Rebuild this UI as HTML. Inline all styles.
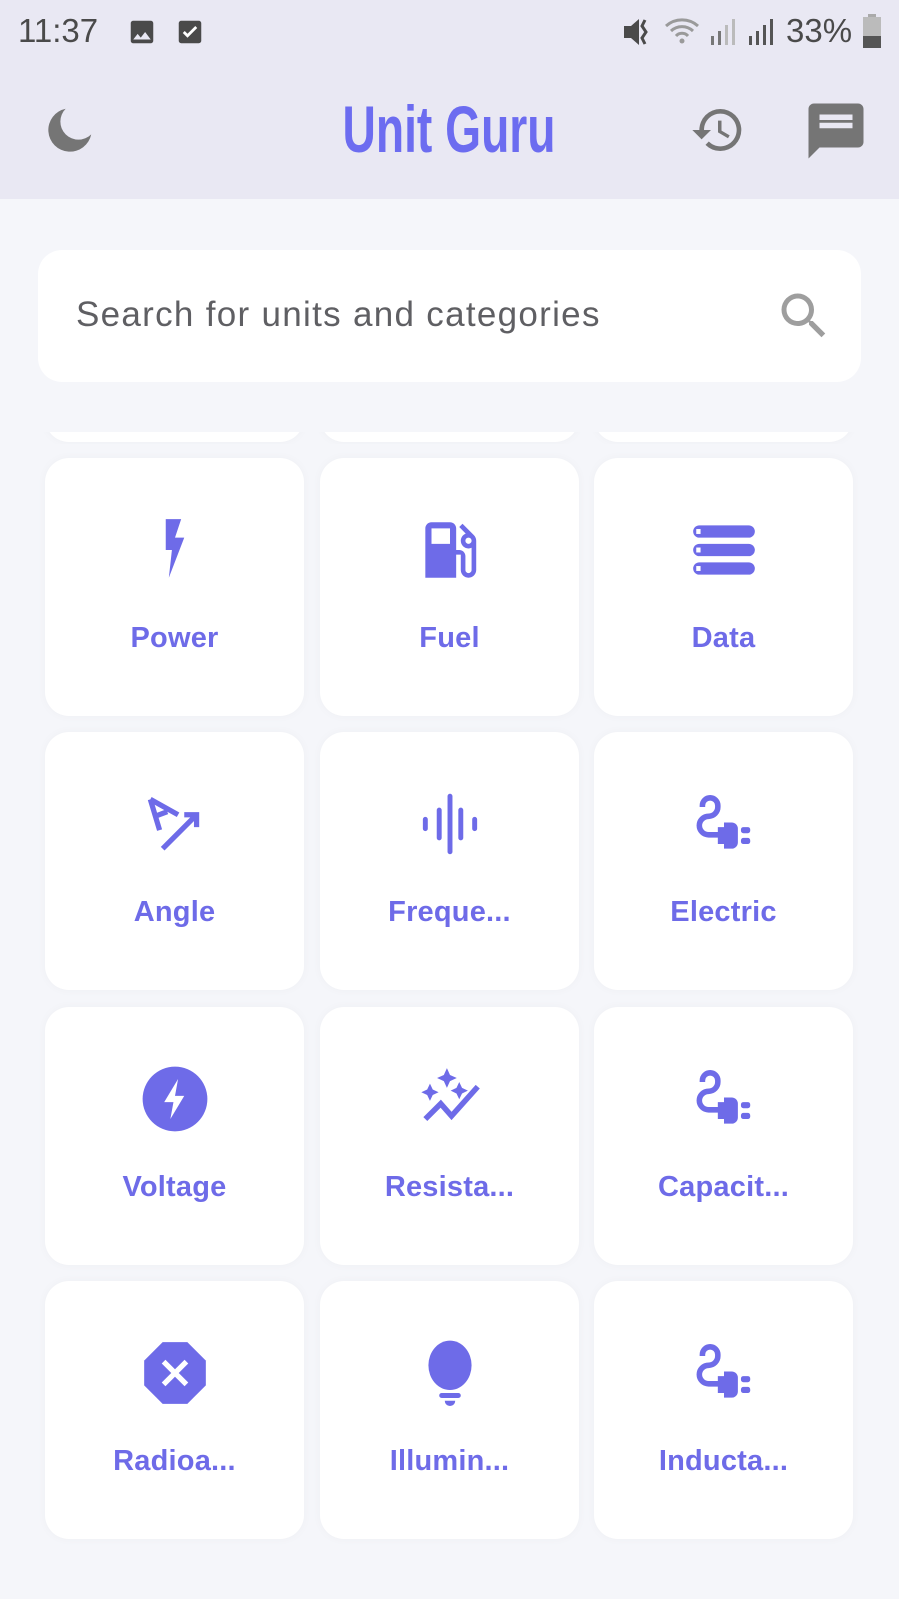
<!DOCTYPE html>
<html><head><meta charset="utf-8">
<style>
*{margin:0;padding:0;box-sizing:border-box}
body{width:899px;height:1599px;overflow:hidden;background:#f5f6fa;font-family:"Liberation Sans",sans-serif;position:relative}
.top{position:absolute;left:0;top:0;width:899px;height:199px;background:#e9e8f3}
.status{position:absolute;top:12px;font-size:33px;color:#4a4a4a}
.title{position:absolute;left:449px;top:129px;transform:translate(-50%,-50%) scaleX(0.70);font-size:66px;font-weight:bold;color:#6c6cf0;white-space:nowrap}
.search{position:absolute;left:38px;top:250px;width:823px;height:132px;background:#fff;border-radius:24px}
.search span{position:absolute;left:38px;top:45px;font-size:35px;color:#5f5f63;letter-spacing:1.3px}
.card{position:absolute;width:259px;height:258px;background:#fff;border-radius:24px;box-shadow:0 0 10px rgba(0,0,0,0.03)}
.card svg{position:absolute;left:93px;top:55px;width:74px;height:74px}
.card .l{position:absolute;left:0;width:100%;top:164px;text-align:center;font-size:29px;font-weight:bold;color:#6e6be8;letter-spacing:0.2px}
</style></head><body>
<div class="top"></div>
<div class="status" style="left:18px">11:37</div>
<svg style="position:absolute;left:127px;top:17px" width="30" height="30" viewBox="0 0 24 24"><path fill="#4a4a4a" d="M21 19V5c0-1.1-.9-2-2-2H5c-1.1 0-2 .9-2 2v14c0 1.1.9 2 2 2h14c1.1 0 2-.9 2-2zM8.5 13.5l2.5 3 3.5-4.5 4.5 6H5l3.5-4.5z"/></svg>
<svg style="position:absolute;left:175px;top:17px" width="30" height="30" viewBox="0 0 24 24"><rect x="3" y="3" width="18" height="18" rx="2" fill="#4a4a4a"/><path d="M7 12l3 3 7-7" stroke="#fff" stroke-width="2.2" fill="none"/></svg>
<svg style="position:absolute;left:622px;top:16px" width="40" height="32" viewBox="0 0 40 32"><path fill="#4a4a4a" d="M2 10h7l8-7v26l-8-7H2z"/><path d="M23 4l-3 6 4 6-4 6 3 6" stroke="#4a4a4a" stroke-width="3" fill="none"/></svg>
<svg style="position:absolute;left:664px;top:14px" width="40" height="34" viewBox="0 0 40 34"><path d="M2 12a24 24 0 0 1 32 0M7 17a16 16 0 0 1 22 0M12 22a8 8 0 0 1 12 0" stroke="#9a9a9a" stroke-width="3" fill="none"/><circle cx="18" cy="27" r="2.5" fill="#9a9a9a"/></svg>
<svg style="position:absolute;left:708px;top:16px" width="30" height="30" viewBox="0 0 30 30"><g fill="#777"><rect x="3" y="20" width="3" height="9"/><rect x="10" y="15" width="3" height="14"/><rect x="17" y="9" width="3" height="20" fill="#bbb"/><rect x="24" y="3" width="3" height="26" fill="#bbb"/></g></svg>
<svg style="position:absolute;left:746px;top:16px" width="30" height="30" viewBox="0 0 30 30"><g fill="#555"><rect x="3" y="20" width="3" height="9"/><rect x="10" y="15" width="3" height="14"/><rect x="17" y="9" width="3" height="20"/><rect x="24" y="3" width="3" height="26"/></g></svg>
<div class="status" style="left:786px">33%</div>
<svg style="position:absolute;left:862px;top:14px" width="20" height="34" viewBox="0 0 20 34"><rect x="6" y="0" width="8" height="4" fill="#aaa"/><rect x="1" y="3" width="18" height="31" fill="#bbb"/><rect x="1" y="22" width="18" height="12" fill="#555"/></svg>

<svg style="position:absolute;left:44px;top:104px" width="52" height="52" viewBox="0 0 24 24"><path fill="#757575" d="M10 2.2A10 10 0 1 0 21.8 14a7.5 7.5 0 0 1-11.8-11.8z"/></svg>
<div class="title">Unit Guru</div>
<svg style="position:absolute;left:690px;top:102px" width="56" height="56" viewBox="0 0 24 24"><path fill="#757575" d="M13 3a9 9 0 0 0-9 9H1l3.89 3.89.07.14L9 12H6c0-3.87 3.13-7 7-7s7 3.13 7 7-3.13 7-7 7c-1.93 0-3.68-.79-4.94-2.06l-1.42 1.42A8.954 8.954 0 0 0 13 21a9 9 0 0 0 0-18zm-1 5v5l4.28 2.54.72-1.21-3.5-2.08V8H12z"/></svg>
<svg style="position:absolute;left:803px;top:98px" width="66" height="66" viewBox="0 0 24 24"><path fill="#757575" d="M20 2H4c-1.1 0-2 .9-2 2v18l4-4h14c1.1 0 2-.9 2-2V4c0-1.1-.9-2-2-2zM6 9h12v2H6V9zm8 5H6v-2h8v2zm4-6H6V6h12v2z"/><path fill="#757575" d="M6 12h12v2H6z"/></svg>

<div class="search"><span>Search for units and categories</span>
<svg style="position:absolute;left:736px;top:36px" width="60" height="60" viewBox="0 0 24 24"><path fill="#9e9e9e" d="M15.5 14h-.79l-.28-.27A6.471 6.471 0 0 0 16 9.5 6.5 6.5 0 1 0 9.5 16c1.61 0 3.09-.59 4.23-1.57l.27.28v.79l5 4.99L20.49 19l-4.99-5zm-6 0C7.01 14 5 11.99 5 9.5S7.01 5 9.5 5 14 7.01 14 9.5 11.99 14 9.5 14z"/></svg></div>

<div style="position:absolute;left:0;top:432px;width:899px;height:12px;overflow:hidden">
<div class="card" style="left:45px;top:-248px"></div><div class="card" style="left:320px;top:-248px"></div><div class="card" style="left:594px;top:-248px"></div></div>

<div class="card" style="left:45px;top:458px"><svg viewBox="0 0 24 24"><path fill="#6e6be8" d="M9 2h5l-2 6h3l-5 13 1-9H9z"/></svg><div class="l">Power</div></div>
<div class="card" style="left:320px;top:458px"><svg viewBox="0 0 24 24"><path fill="#6e6be8" d="M19.77 7.23l.01-.01-3.72-3.72L15 4.56l2.11 2.11c-.94.36-1.61 1.260-1.610 2.33 0 1.38 1.12 2.5 2.5 2.5.36 0 .69-.08 1-.21v7.21c0 .55-.45 1-1 1s-1-.45-1-1V14c0-1.1-.9-2-2-2h-1V5c0-1.1-.9-2-2-2H6c-1.1 0-2 .9-2 2v16h10v-7.5h1.5v5c0 1.38 1.12 2.5 2.5 2.5s2.5-1.12 2.5-2.5V9c0-.69-.28-1.32-.73-1.77zM12 10H6V5h6v5zm6 0c-.55 0-1-.45-1-1s.45-1 1-1 1 .45 1 1-.45 1-1 1z"/></svg><div class="l">Fuel</div></div>
<div class="card" style="left:594px;top:458px"><svg viewBox="0 0 24 24"><g fill="#6e6be8"><rect x="2" y="4" width="20" height="4" rx="2"/><rect x="2" y="10" width="20" height="4" rx="2"/><rect x="2" y="16" width="20" height="4" rx="2"/></g><g fill="#fff"><rect x="3" y="5.2" width="1.4" height="1.6"/><rect x="3" y="11.2" width="1.4" height="1.6"/><rect x="3" y="17.2" width="1.4" height="1.6"/></g></svg><div class="l">Data</div></div>

<div class="card" style="left:45px;top:732px"><svg viewBox="0 0 24 24"><g stroke="#6e6be8" stroke-width="1.7" fill="none"><path d="M4 4l3 10M4 4l9 5M5.5 9.5l4-1.5M8 20L19 9M15 9h4v4"/></g></svg><div class="l">Angle</div></div>
<div class="card" style="left:320px;top:732px"><svg viewBox="0 0 24 24"><g stroke="#6e6be8" stroke-width="1.6" stroke-linecap="round"><path d="M4 10.5v3M8.5 7.5v9M12 3v18M15.5 7.5v9M20 10.5v3"/></g></svg><div class="l">Freque...</div></div>
<div class="card" style="left:594px;top:732px"><svg viewBox="0 0 24 24"><path d="M5 6.5V6a2.5 2.5 0 0 1 5 0v.5A3 3 0 0 1 7 9.5a3 3 0 0 0 0 6h3.5" stroke="#6e6be8" stroke-width="1.8" fill="none"/><path fill="#6e6be8" d="M10 13h2v-1.5h2.5a2 2 0 0 1 2 2V18a2 2 0 0 1-2 2H12v-1.5h-2z"/><rect x="17.5" y="13" width="3" height="2" rx=".8" fill="#6e6be8"/><rect x="17.5" y="16.5" width="3" height="2" rx=".8" fill="#6e6be8"/></svg><div class="l">Electric</div></div>

<div class="card" style="left:45px;top:1007px"><svg viewBox="0 0 24 24"><circle cx="12" cy="12" r="10.5" fill="#6e6be8"/><path fill="#fff" d="M13 5.5l-4.5 7.5h3l-1 5.5 4.5-7.5h-3z"/></svg><div class="l">Voltage</div></div>
<div class="card" style="left:320px;top:1007px"><svg viewBox="0 0 24 24"><g fill="#6e6be8"><path d="M11 2l1 2.2 2.2 1-2.2 1-1 2.2-1-2.2-2.2-1 2.2-1z"/><path d="M5.5 7l.9 1.9 1.9.9-1.9.9-.9 1.9-.9-1.9-1.9-.9 1.9-.9z"/><path d="M15 6.5l.9 1.9 1.9.9-1.9.9-.9 1.9-.9-1.9-1.9-.9 1.9-.9z"/></g><path d="M4 18.5l5-5 3.5 4L21 8" stroke="#6e6be8" stroke-width="1.8" fill="none"/></svg><div class="l">Resista...</div></div>
<div class="card" style="left:594px;top:1007px"><svg viewBox="0 0 24 24"><path d="M5 6.5V6a2.5 2.5 0 0 1 5 0v.5A3 3 0 0 1 7 9.5a3 3 0 0 0 0 6h3.5" stroke="#6e6be8" stroke-width="1.8" fill="none"/><path fill="#6e6be8" d="M10 13h2v-1.5h2.5a2 2 0 0 1 2 2V18a2 2 0 0 1-2 2H12v-1.5h-2z"/><rect x="17.5" y="13" width="3" height="2" rx=".8" fill="#6e6be8"/><rect x="17.5" y="16.5" width="3" height="2" rx=".8" fill="#6e6be8"/></svg><div class="l">Capacit...</div></div>

<div class="card" style="left:45px;top:1281px"><svg viewBox="0 0 24 24"><path fill="#6e6be8" d="M8 2h8l6 6v8l-6 6H8l-6-6V8z"/><path d="M8.3 8.3l7.4 7.4M15.7 8.3l-7.4 7.4" stroke="#fff" stroke-width="1.7"/></svg><div class="l">Radioa...</div></div>
<div class="card" style="left:320px;top:1281px"><svg viewBox="0 0 24 24"><ellipse cx="12" cy="9.5" rx="7" ry="8" fill="#6e6be8"/><rect x="8.5" y="18.5" width="7" height="1.6" rx=".8" fill="#6e6be8"/><path d="M10.3 21h3.4a1.7 1.7 0 0 1-3.4 0z" fill="#6e6be8"/></svg><div class="l">Illumin...</div></div>
<div class="card" style="left:594px;top:1281px"><svg viewBox="0 0 24 24"><path d="M5 6.5V6a2.5 2.5 0 0 1 5 0v.5A3 3 0 0 1 7 9.5a3 3 0 0 0 0 6h3.5" stroke="#6e6be8" stroke-width="1.8" fill="none"/><path fill="#6e6be8" d="M10 13h2v-1.5h2.5a2 2 0 0 1 2 2V18a2 2 0 0 1-2 2H12v-1.5h-2z"/><rect x="17.5" y="13" width="3" height="2" rx=".8" fill="#6e6be8"/><rect x="17.5" y="16.5" width="3" height="2" rx=".8" fill="#6e6be8"/></svg><div class="l">Inducta...</div></div>
</body></html>
